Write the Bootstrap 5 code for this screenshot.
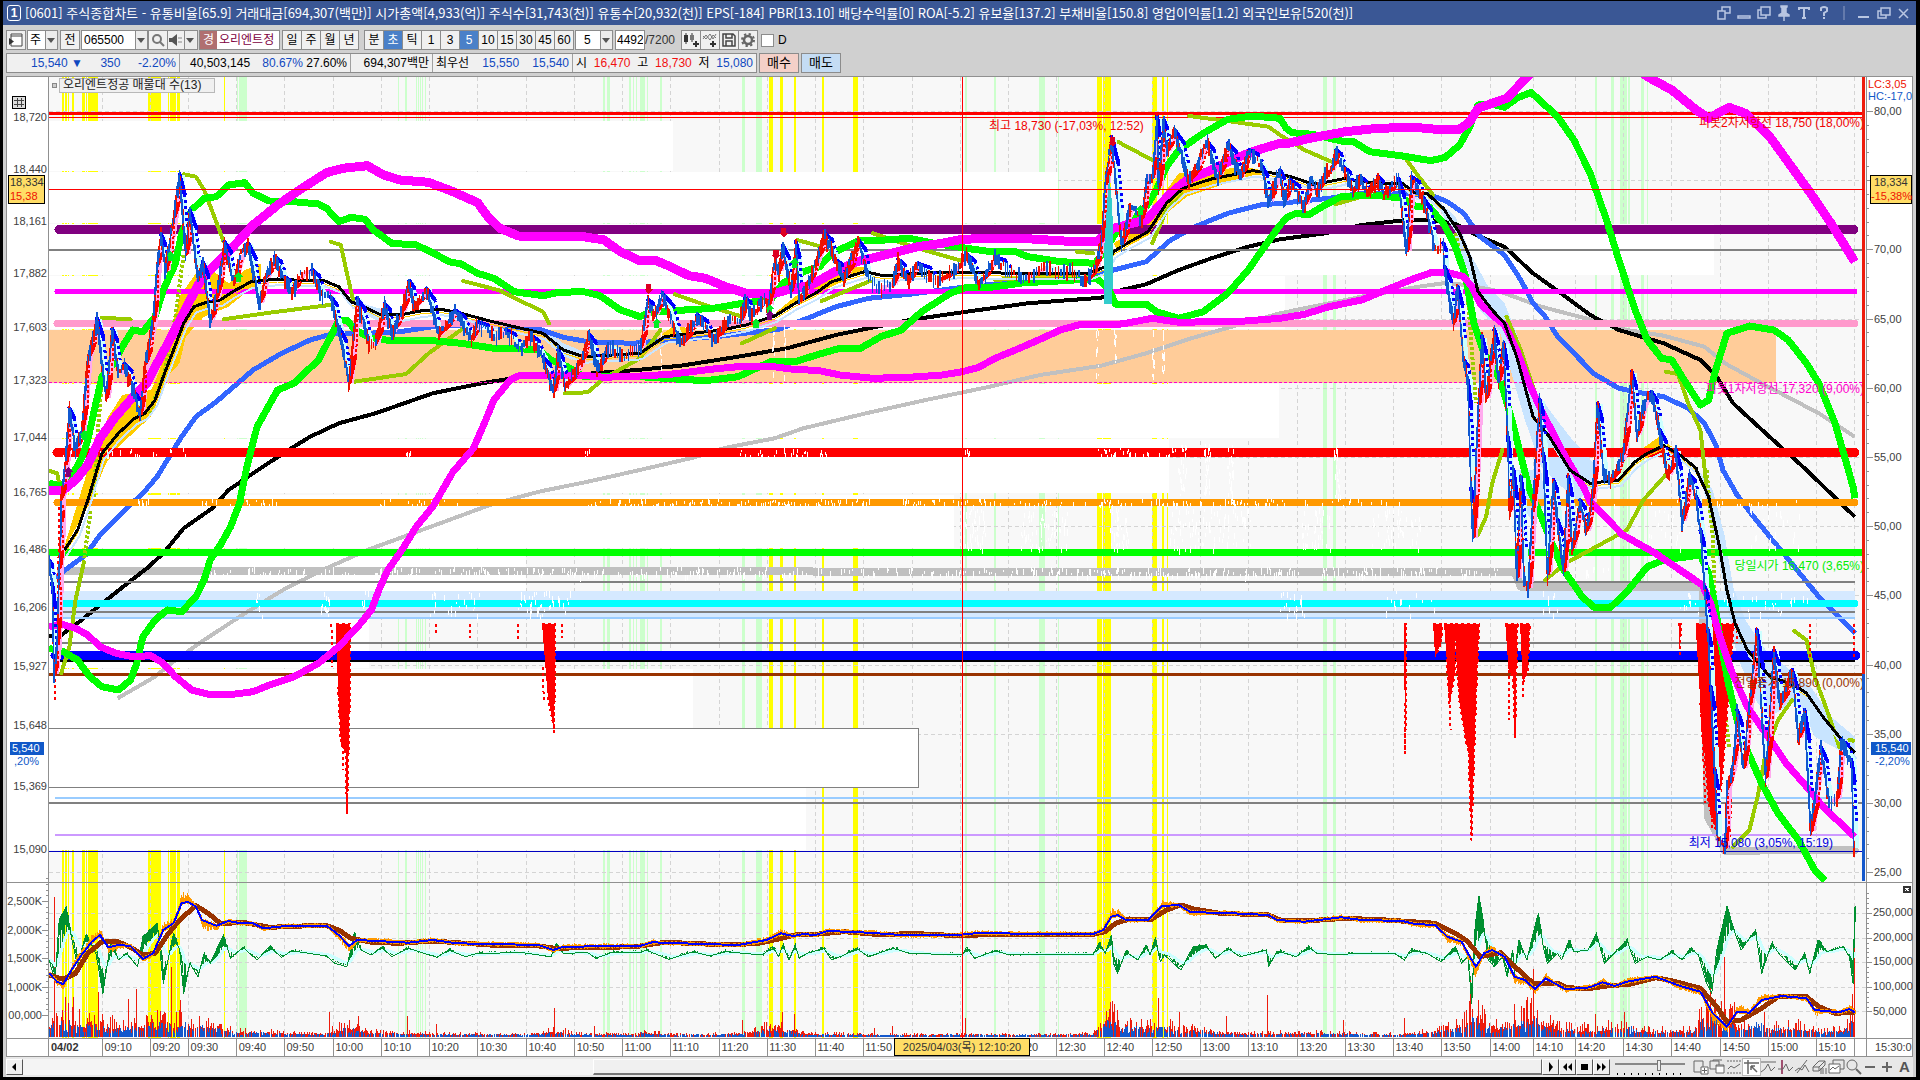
<!DOCTYPE html>
<html lang="ko">
<head>
<meta charset="utf-8">
<meta name="viewport" content="width=device-width, initial-scale=1">
<title>[0601] 주식종합차트</title>
<link href="https://cdn.jsdelivr.net/npm/bootstrap@5.3.0/dist/css/bootstrap.min.css" rel="stylesheet">
<style>
:root{--ui:"Liberation Sans","Noto Sans CJK KR",sans-serif}
body{background:#000;font:12px/16px var(--ui);color:#000;overflow:hidden}
button,input,select{font:12px/16px var(--ui);color:#000}
.win{background:#d0d0d0;margin:1px 4px 3px 3px;height:calc(100vh - 4px)}
.titlebar{background:#3a5795;color:#fff;height:24px;white-space:pre;font:13px/20px "Noto Sans CJK KR",sans-serif}
.tl-num{width:14px;height:16px;border:1px solid #fff;border-radius:3px;font:700 12px/14px var(--ui);text-align:center}
.titlebar svg{width:16px;height:16px;stroke:#b9c6e2;fill:none;stroke-width:1.5}
.tb{height:20px;padding:0 3px;white-space:nowrap}
.tb1{margin-top:5px}.tb2{margin-top:3px;margin-bottom:3px}
.gap-s{margin-left:2px}.gap-m{margin-left:6px}
.tbtn{height:20px;border:1px solid #8c8c8c;background:#f0f0f0;padding:0;text-align:center;width:20px;margin-right:-1px;flex:none;line-height:18px}
.tbtn.on{background:#4a80c8;color:#fff}
.tbtn svg{width:16px;height:16px;display:block;margin:0 auto}
.field{height:20px;border:1px solid #8c8c8c;background:#fff;padding:0 2px;border-radius:0;min-width:0;flex:none;appearance:none;line-height:18px;display:block}
.kind{width:31px}.code{width:67px}.speaker{width:31px}.stock{width:81px;color:#800040;padding:0;overflow:hidden}
.stock b{background:#b07070;color:#fff;width:17px;text-align:center;margin-right:2px;font-weight:400}
.period{width:38px;padding-left:8px}.bars{width:30px;padding:0 1px}.barmax{width:36px;color:#333}
.dbox{width:13px;height:13px;margin:0 4px}
.dbox:checked{background:#4a80c8}
.combo{position:relative;height:20px;flex:none}
.combo::before{content:"";position:absolute;right:1px;top:1px;width:12px;height:18px;background:#ececec;border-left:1px solid #8c8c8c}
.combo::after{content:"";position:absolute;right:3px;top:8px;border:4px solid transparent;border-top:5px solid #555;border-bottom:0}
.quotes{width:751px;height:20px;background:#f0f0f0;border:1px solid #8c8c8c;line-height:18px}
.quotes>div{border-right:1px solid #a0a0a0;padding:0 3px}
.quotes>div:last-child{border:0}
.q1{width:173px}.quotes>.q1{padding-left:24px}.q2{width:171px}.quotes>.q2{padding-left:10px}.q3{width:82px}.q4{width:140px}
.dn{color:#1048c0}.up{color:#f01010}
.obtn{width:40px;height:20px;border:1px solid #8c8c8c;padding:0;margin-left:2px;font-size:13px}
.buy{background:#f4d0c8}.sell{background:#c4dcf4}
.stage{flex:1 1 0;min-height:0;margin:0 3px;background:#fff;border-top:1px solid #909090}
.stage svg{display:block;width:100%;height:100%}
.stage text{font-family:var(--ui);font-size:11px}
.stage text.ko{font-size:12px}
.foot{height:20px;margin:0 3px;background:#e8e8e8;padding-top:2px}
.track{height:16px;background:#f4f4f4}
.thumb{margin-left:37.5%;height:16px;background:#f0f0f0;border:1px solid #fff;border-right-color:#666;border-bottom:2px solid #777;padding:0;display:block;width:62.5%}
.pb{width:17px;height:16px;border:1px solid #fff;border-right:1px solid #555;border-bottom:1px solid #555;background:#f0f0f0;padding:0;flex:none}
.pb svg{display:block;width:15px;height:14px}
.tool{border:0;background:none;padding:0;width:17px;height:16px;flex:none}
.tool.on{background:#fff;outline:1px solid #bbb}
.tool svg{display:block;width:17px;height:16px;fill:none;stroke:#666}
.tool.letter{font:700 15px/16px var(--ui);color:#555}
.zoomer{width:70px;height:16px;margin:0 7px 0 5px;appearance:none;background:linear-gradient(#888,#888) 0 4px/100% 2px no-repeat,repeating-linear-gradient(90deg,#000 0 1px,transparent 1px 7px) 2px 14px/100% 2px no-repeat}
.zoomer::-webkit-slider-thumb{appearance:none;width:4px;height:11px;background:#eee;border:1px solid #777;margin-top:-4px}
</style>
<script src="https://cdn.jsdelivr.net/npm/bootstrap@5.3.0/dist/js/bootstrap.bundle.min.js"></script>
</head>
<body>
<main class="win d-flex flex-column">
<header class="titlebar d-flex align-items-center flex-shrink-0">
 <span class="tl-num ms-1 me-1">1</span>
 <span class="flex-grow-1">[0601] 주식종합차트 - 유통비율[65.9] 거래대금[694,307(백만)] 시가총액[4,933(억)] 주식수[31,743(천)] 유통수[20,932(천)] EPS[-184] PBR[13.10] 배당수익률[0] ROA[-5.2] 유보율[137.2] 부채비율[150.8] 영업이익률[1.2] 외국인보유[520(천)]</span>
 <span class="d-flex gap-1 me-1">
 <svg viewBox="0 0 16 16"><path d="M2 6h7v8H2zM6 6V2h8v6H9"/></svg>
 <svg viewBox="0 0 16 16"><path d="M2 11h12v2H2z"/></svg>
 <svg viewBox="0 0 16 16"><path d="M5 2h9v8H5zM5 5H2v8h8v-3"/></svg>
 <svg viewBox="0 0 16 16"><path d="M5 1h6v1l-1 1v5l3 2v1H3v-1l3-2V3L5 2zM8 11v5" fill="#b9c6e2"/></svg>
 <svg viewBox="0 0 16 16"><path d="M3 5V3h10v2M8 3v10M6 13h4" stroke-width="2"/></svg>
 <svg viewBox="0 0 16 16"><path d="M5 6V3q3-2 6 0v3L8 8v3M8 12v2" stroke-width="2"/></svg>
 <svg viewBox="0 0 16 16"><path d="M8 1v14" stroke="#7386b5"/></svg>
 <svg viewBox="0 0 16 16"><path d="M2 12h11" stroke-width="2"/></svg>
 <svg viewBox="0 0 16 16"><path d="M5 3h9v7H5zM5 6H2v7h8v-3"/></svg>
 <svg viewBox="0 0 16 16"><path d="M3 4l9 9M12 4l-9 9"/></svg>
 </span>
</header>

<div class="tb tb1 d-flex align-items-center flex-shrink-0">
 <button class="tbtn" aria-label="패널"><svg viewBox="0 0 16 16"><path d="M3 2h11v12H3z" fill="#fff" stroke="#444"/><path d="M3 4h11" stroke="#444"/><path d="M1 6v7l5-3.500z" fill="#333"/></svg></button>
 <span class="combo gap-s"><select class="field kind" aria-label="구분"><option>주</option></select></span>
 <button class="tbtn gap-s">전</button>
 <span class="combo gap-s"><input class="field code" value="065500" aria-label="종목코드"></span>
 <button class="tbtn" aria-label="검색"><svg viewBox="0 0 16 16"><circle cx="7" cy="7" r="4" fill="none" stroke="#777" stroke-width="2"/><path d="M10 10l4 4" stroke="#777" stroke-width="2"/></svg></button>
 <span class="combo"><button class="tbtn speaker" aria-label="소리"><svg viewBox="0 0 16 16" class="ms-0"><path d="M1 6h3l5-4v12L4 10H1z" fill="#555"/><path d="M11 5v2M13 5v2M11 9v2M13 9v2" stroke="#888"/></svg></button></span>
 <span class="field stock d-flex gap-s"><b>경</b>오리엔트정</span>
 <span class="d-flex gap-s"><button class="tbtn">일</button><button class="tbtn">주</button><button class="tbtn">월</button><button class="tbtn">년</button></span>
 <span class="d-flex gap-m"><button class="tbtn">분</button><button class="tbtn on">초</button><button class="tbtn">틱</button></span>
 <span class="d-flex"><button class="tbtn">1</button><button class="tbtn">3</button><button class="tbtn on">5</button><button class="tbtn">10</button><button class="tbtn">15</button><button class="tbtn">30</button><button class="tbtn">45</button><button class="tbtn">60</button></span>
 <span class="combo gap-s"><select class="field period" aria-label="주기"><option>5</option></select></span>
 <input class="field bars gap-s" value="4492" aria-label="봉수"><span class="barmax">/7200</span>
 <button class="tbtn" aria-label="봉 추가"><svg viewBox="0 0 16 16"><path d="M3 1v11M9 1v9" stroke="#333"/><path d="M1 3h4v7H1z" fill="#333"/><path d="M7 3h4v5H7z" fill="#777"/><path d="M13 9v6M10 12h6" stroke="#333" stroke-width="2"/></svg></button>
 <button class="tbtn" aria-label="지표 추가"><svg viewBox="0 0 16 16"><path d="M1 7l3-4 4 5 3-5 3 3M1 4l3 3 4-5 3 5 3-5" fill="none" stroke="#777"/><path d="M11 9v6M8 12h6" stroke="#333" stroke-width="2"/></svg></button>
 <button class="tbtn" aria-label="저장"><svg viewBox="0 0 16 16"><path d="M2 2h10l2 2v10H2zM5 2v4h6V2M5 14V9h6v5" fill="none" stroke="#444" stroke-width="1.500"/></svg></button>
 <button class="tbtn" aria-label="설정"><svg viewBox="0 0 16 16"><circle cx="8" cy="8" r="4" fill="none" stroke="#666" stroke-width="2.500"/><circle cx="8" cy="8" r="6" fill="none" stroke="#666" stroke-width="2" stroke-dasharray="2.300 2.400"/></svg></button>
 <input type="checkbox" id="dchk" class="field dbox"><label for="dchk">D</label>
</div>

<div class="tb tb2 d-flex flex-shrink-0">
 <div class="quotes d-flex flex-shrink-0">
  <div class="q1 dn d-flex justify-content-between"><span>15,540 ▼</span><span>350</span><span>-2.20%</span></div>
  <div class="q2 d-flex justify-content-between"><span>40,503,145</span><span><span class="dn">80.67%</span> 27.60%</span></div>
  <div class="q3 text-end">694,307백만</div>
  <div class="q4 d-flex justify-content-between"><span>최우선</span><span class="dn">15,550</span><span class="dn">15,540</span></div>
  <div class="d-flex justify-content-between flex-grow-1"><span>시</span><span class="up">16,470</span><span>고</span><span class="up">18,730</span><span>저</span><span class="dn">15,080</span></div>
 </div>
 <button class="obtn buy">매수</button><button class="obtn sell">매도</button>
</div>

<section class="stage" id="stage"></section>

<footer class="foot d-flex flex-shrink-0">
 <button class="pb" aria-label="왼쪽"><svg viewBox="0 0 15 14"><path d="M9 3v8L5 7z"/></svg></button>
 <div class="track flex-grow-1"><button class="thumb" aria-label="스크롤"></button></div>
 <button class="pb" aria-label="재생"><svg viewBox="0 0 15 14"><path d="M6 2v10l4-5z"/></svg></button>
 <button class="pb" aria-label="뒤로"><svg viewBox="0 0 15 14"><path d="M7 3v8L3 7zM12 3v8L8 7z"/></svg></button>
 <button class="pb" aria-label="정지"><svg viewBox="0 0 15 14"><path d="M4 4h7v6H4z"/></svg></button>
 <button class="pb" aria-label="앞으로"><svg viewBox="0 0 15 14"><path d="M3 3v8l4-4zM8 3v8l4-4z"/></svg></button>
 <input type="range" class="zoomer" aria-label="배율" value="64">
 <button class="tool" aria-label="창 추가"><svg viewBox="0 0 17 16"><path d="M2 2h9v11H2z"/><path d="M9 8h7v7H9zM12.500 9v5M10 11.500h5" fill="#fff"/></svg></button>
 <button class="tool" aria-label="창 복사"><svg viewBox="0 0 17 16"><path d="M1 2h9v8H1zM4 2V1h9"/><path d="M7 6h8v8H7zM7 7h8" fill="#fff"/></svg></button>
 <button class="tool" aria-label="영역"><svg viewBox="0 0 17 16"><path d="M1 2h14M1 14h14" stroke-dasharray="2 1"/><path d="M2 10l3-3 3 2 6-4"/></svg></button>
 <button class="tool on" aria-label="십자선"><svg viewBox="0 0 17 16"><path d="M1 4h15M5 1v14M8 7l6 6M8 7v4M8 7h4" stroke-width="1.500"/></svg></button>
 <button class="tool" aria-label="수평선"><svg viewBox="0 0 17 16"><path d="M1 3h15M1 13l4-3 3-5 3 7 4-4"/></svg></button>
 <button class="tool" aria-label="수직선"><svg viewBox="0 0 17 16"><path d="M5 1v14" stroke="#a05070" stroke-width="2"/><path d="M1 10h5l3-5 3 7 4-4"/></svg></button>
 <button class="tool" aria-label="추세선"><svg viewBox="0 0 17 16"><path d="M3 14L13 1M1 12l4-3 3 2 3-5 4 7"/></svg></button>
 <button class="tool" aria-label="모두 지우기"><svg viewBox="0 0 17 16"><path d="M2 8l6-6h6l-6 6v4H2zM2 8h6M14 2v4l-6 6M10 15V9M12 15V9M15 15V9"/></svg></button>
 <button class="tool" aria-label="이미지"><svg viewBox="0 0 17 16"><path d="M5 1h11v9H5z"/><path d="M1 5h11v9H1zM2 11l3-3 2 2 4-3" fill="#fff"/></svg></button>
 <button class="tool" aria-label="돋보기"><svg viewBox="0 0 17 16"><circle cx="7" cy="6" r="5"/><path d="M11 10l5 5" stroke-width="2"/></svg></button>
 <button class="tool" aria-label="축소"><svg viewBox="0 0 17 16"><path d="M3 8h10" stroke-width="2"/></svg></button>
 <button class="tool" aria-label="확대"><svg viewBox="0 0 17 16"><path d="M3 8h10M8 3v10" stroke-width="2"/></svg></button>
 <button class="tool letter">A</button>
</footer>
</main>

<script>
/* Chart data. Traces are stored per tile: origin (x,y) and points at 2.45 x 3 units per pixel. */
const TILES={a:[0,130],b:[640,100],c:[1280,70],d:[1280,470],e:[0,500],p:[0,860],q:[640,860],r:[1280,860]};
function trace(s){
  const out=[];let o=[0,0];
  s.trim().split(/\s+/).forEach(t=>{
    if(TILES[t]){o=TILES[t];return}
    const [x,y]=t.split(',').map(Number);out.push([o[0]+x/2.45,o[1]+y/3]);
  });
  return out;
}
const upperBand=trace(`a 120,1080 155,1080 185,1050 215,1005 245,925 280,865 330,795 360,760 385,700 420,620 455,535 490,455 530,400 575,345 620,285 680,225 740,175 800,128 840,115 900,107 940,135 980,150 1050,157 1110,185 1170,218 1195,260 1225,295 1270,318 1330,320 1420,318 1480,330 1520,365 1568,392 b 20,480 40,482 75,500 120,527 160,535 210,560 260,580 320,583 360,570 420,555 470,520 530,485 600,465 680,440 740,430 790,418 860,415 960,417 1050,424 1120,424 1160,385 1200,372 1240,360 1270,320 1300,280 1340,240 1400,210 1450,180 1500,155 1568,130 c 20,220 80,203 160,185 240,175 330,172 400,180 440,178 465,155 485,115 520,100 555,85 575,60 605,20 700,-80 800,-80 900,20 960,60 1020,120 1050,145 1100,112 1140,130 1200,200 1250,285 1300,370 1350,460 1408,575`);
const lowerBand=trace(`e 120,380 150,372 185,385 215,405 245,440 285,460 325,470 370,467 400,490 430,530 470,570 510,583 570,583 620,575 660,555 720,530 780,490 830,440 880,375 910,330 930,265 950,210 985,150 1020,80 a 1060,1130 1110,1025 1160,955 1190,870 1210,810 1250,750 1275,735 1340,735 1420,735 1480,742 1568,738 b 20,827 80,822 180,807 250,799 320,799 370,807 440,812 490,825 570,835 660,832 740,825 790,815 830,802 870,775 920,750 980,718 1030,690 1080,673 1160,675 1190,670 1255,655 1320,667 1400,665 1460,665 1568,655 c 20,741 60,733 120,710 200,690 270,655 330,625 370,608 410,607 450,620 470,650 490,700 520,735 550,765 580,840 610,940 640,1020 690,1140 745,1255 d 760,95 840,195 920,250 980,300 1035,345 1055,400 1075,490 1105,600 1145,710 1190,790 1240,880 1290,950 1330,1010 1408,1100`);
const greenUp=trace(`a 120,1060 150,1068 175,1040 200,985 215,930 235,820 250,740 280,700 300,650 325,600 350,605 380,560 400,480 430,400 445,310 470,240 500,205 530,200 560,165 600,158 620,190 660,213 720,215 780,222 800,235 830,275 860,262 895,268 915,300 960,340 1020,345 1060,368 1100,395 1130,402 1170,430 1210,445 1260,485 1330,497 1370,487 1430,485 1470,497 1520,540 1568,560 b 20,638 80,632 180,625 260,608 320,600 350,550 400,515 440,500 470,460 540,420 600,420 660,415 720,430 790,443 860,455 920,455 950,470 1030,485 1115,490 1140,450 1170,390 1200,370 1240,320 1265,270 1290,200 1320,150 1380,100 1440,58 1500,48 1568,55 c 15,175 30,188 80,193 150,213 180,215 220,245 300,258 370,272 405,262 440,225 465,170 485,105 520,103 550,112 580,85 615,67 640,95 680,140 720,210 760,310 800,450 830,570 870,720 900,810 935,865 960,870 990,930 1030,1005 1050,990 1065,910 1095,790 1150,768 1210,780 1245,810 1290,880 1320,940 1360,1060 1405,1255 d 1408,85`);
const greenLow=trace(`e 120,445 155,455 190,480 220,530 250,560 290,570 320,540 335,490 350,410 380,360 410,330 445,335 480,290 500,240 515,180 540,135 565,80 590,0 a 590,1100 605,1010 630,890 680,780 720,760 780,690 810,620 830,570 850,570 870,600 910,625 960,632 1060,632 1130,640 1210,655 1260,655 1320,660 1350,690 1390,710 1430,740 1500,740 1568,740 b 60,835 160,842 240,830 320,785 380,785 440,762 490,745 540,745 590,710 640,690 690,635 760,580 800,562 860,562 940,548 1040,542 1120,535 1150,570 1165,612 1240,612 1265,635 1320,655 1380,635 1440,580 1490,510 1530,440 1568,375 c 20,440 40,430 70,435 110,405 150,380 230,375 300,385 330,408 365,410 400,460 430,530 455,620 475,760 500,850 540,930 570,1060 610,1255 d 640,140 690,290 740,380 770,412 810,412 850,365 900,290 940,270 1030,255 1050,310 1065,400 1080,520 1100,650 1130,800 1180,940 1220,1030 1270,1110 1310,1200 1335,1232`);
const blueMA=trace(`e 135,235 170,200 210,165 245,105 a 310,1135 350,1090 385,1040 420,970 445,920 480,860 530,815 620,720 690,670 760,630 820,610 900,610 980,605 1060,590 1130,585 1200,588 1320,597 1380,622 1440,635 1550,640 b 200,708 340,688 420,650 480,620 560,595 660,583 790,562 900,548 1020,530 1110,525 1160,510 1240,485 1300,420 1360,380 1440,340 1520,315 c 0,400 120,385 200,370 300,370 370,375 410,395 450,430 490,500 550,555 590,630 620,700 650,740 680,800 720,850 770,912 830,955 890,970 940,980 1000,1015 1040,1060 1070,1130 d 1085,0 1120,75 1160,140 1240,260 1320,380 1410,490`);
const longMA=trace(`e 120,408 150,405 200,360 240,320 300,262 360,205 400,160 450,85 a 520,1135 560,1080 620,1030 700,965 760,920 830,880 920,850 1060,790 1180,760 1280,740 1400,735 1560,720 b 100,797 240,770 360,745 480,705 560,685 660,660 800,635 950,610 1130,593 1180,570 1240,553 1320,510 1400,475 1490,440 c 0,508 110,490 200,465 310,450 370,450 430,462 490,500 550,530 620,610 700,680 760,735 830,780 940,820 1030,870 1070,920 1110,1000 1190,1090 d 1290,0 1408,140`);
const shortMA=trace(`e 158,150 190,90 a 215,1110 230,1050 250,970 290,910 330,865 355,850 380,810 400,740 425,660 450,580 475,530 510,515 540,510 570,485 615,455 680,447 720,450 790,450 830,470 860,515 900,535 930,553 980,555 1030,543 1080,538 1130,550 1200,573 1260,590 1330,610 1380,660 1430,680 1500,675 1568,670 b 60,710 130,700 200,690 260,675 330,648 380,610 430,580 470,545 550,515 600,528 660,520 800,517 920,520 1100,520 1140,500 1160,455 1200,425 1245,395 1290,310 1330,265 1400,237 1450,225 1500,212 1568,222 c 40,325 80,343 120,335 160,325 200,335 260,340 300,340 330,368 360,370 400,415 440,490 465,560 485,665 520,720 550,760 580,860 600,950 620,1040 660,1100 710,1200 760,1240 830,1230 870,1175 900,1150 940,1127 980,1155 1020,1195 d 1020,0 1050,80 1075,220 1095,360 1115,460 1145,540 1200,620 1260,645 1290,670 1330,740 1370,800 1408,848`);
const greyMA=trace(`e 288,595 380,530 430,480 500,420 600,340 700,265 790,210 900,150 1000,105 1100,60 a 1200,1125 1320,1085 1440,1055 1560,1022 b 130,1073 210,1043 330,1015 400,985 560,938 700,900 850,862 980,825 1130,797 1240,760 1350,715 1450,680 1568,640 c 200,680 340,650 400,640 460,645 540,665 640,710 780,755 850,780 940,797 1040,830 1090,880 1180,940 1320,1030 1408,1100`);
const gold=[`a 160,1240 200,1080 230,960 265,860 300,795 370,780 385,740 410,650 440,500 480,430 520,420 560,460 600,420 640,400 640,460 600,490 560,530 500,560 455,620 440,700 410,740 390,800 370,860 330,905 290,950 260,1000 215,1130 160,1250`,`b 330,640 380,590 440,540 500,500 560,500 520,530 470,560 400,605`,`b 1160,430 1240,370 1290,270 1320,220 1380,215 1480,200 1540,215 1470,235 1400,265 1340,290 1280,350 1240,410 1170,450`,`b 50,705 80,680 140,685 120,700`,`c 870,1150 930,1100 960,1130 900,1165`].map(trace);
const sky=[`c 380,385 430,440 470,560 510,650 550,700 580,790 620,950 660,1020 710,1100 780,1195 d 770,50 730,90 690,50 c 640,1190 600,1050 560,880 540,790 490,720 460,600 420,490`,`d 1025,0 1060,60 1090,200 1110,350 1140,450 1190,540 1250,600 1300,650 1350,740 1408,800 1408,860 1370,840 1310,800 1270,690 1200,740 1170,700 1120,560 1080,300 1050,120`,`a 860,505 900,525 960,545 930,575 880,545`,`a 1330,590 1380,640 1430,665 1400,690 1350,650`,`d 560,0 640,0 650,100 620,160 590,100`].map(trace);
const olive=[`a 120,1022 140,1030 145,1060`,`a 250,563 320,568`,`a 450,133 480,140 500,180 525,260 548,335`,`a 548,568 650,550 820,523`,`a 810,335 835,345 850,430 865,510`,`a 868,755 995,732 1050,670 1135,595`,`a 1135,453 1220,480 1330,545 1345,580`,`a 1383,790 1440,787 1480,745 1568,685`,`b 0,775 50,690`,`b 85,583 160,615 250,650`,`b 250,730 330,685`,`b 385,420 450,442`,`b 445,603 570,540`,`b 570,400 680,445 790,483`,`b 870,540 1060,523 1110,527`,`b 1070,455 1110,460`,`b 1170,125 1255,180`,`b 1255,430 1290,330 1330,270`,`b 1345,48 1420,60 1540,80 1568,105`,`c 0,195 60,240 135,280`,`c 135,403 200,380`,`c 310,270 340,320 375,375`,`c 555,740 590,840 625,970`,`d 485,195 505,140 520,40 c 545,1140`,`c 945,905 975,912 1000,1000 1030,1080 1045,1250`,`d 650,330 700,280 850,180 890,90 945,15`,`d 1110,1130 1150,1080 1170,980 1190,850 1220,750 1255,690`,`d 1260,483 1290,510 1310,620 1340,720 1370,830`,`d 1395,810 1405,812`,`e 150,520 170,440 185,300 205,190`].map(trace);
const oliveDots=[`a 230,1100 240,900 250,750 260,700`,`a 365,850 400,740 430,560 450,370`,`e 205,190 222,30`,`c 430,490 460,680 480,1000`,`d 1045,0 1060,200 1065,380 1080,620 1100,830`].map(trace);
const price=trace(`e 120,180 128,250 132,520 140,430 145,200 150,60 a 150,1100 160,1000 170,835 185,950 200,900 215,680 238,565 260,800 275,597 290,730 305,700 330,790 343,850 355,700 375,570 385,400 395,315 405,420 425,260 440,133 455,370 465,240 485,440 497,395 515,565 530,500 550,335 572,455 590,370 608,340 635,515 650,440 673,380 695,440 715,480 740,425 765,420 790,490 810,500 830,590 855,755 875,505 905,640 920,635 942,520 960,600 985,540 1003,453 1015,525 1045,475 1075,610 1115,540 1155,625 1170,575 1210,615 1240,600 1275,650 1300,615 1330,680 1357,780 1367,660 1385,765 1420,700 1443,612 1465,710 1490,645 1530,675 1560,640 b 0,740 20,600 35,640 55,580 100,730 140,645 180,715 215,655 245,660 257,595 275,640 305,590 315,610 330,480 340,510 350,437 370,570 382,425 390,600 410,550 435,470 453,400 480,480 500,530 535,420 560,530 585,560 620,550 632,478 655,540 680,490 730,540 780,495 800,462 830,545 870,470 910,515 940,530 990,500 1060,510 1090,540 1115,500 1130,420 1140,250 1155,110 1180,430 1200,315 1230,350 1243,220 1255,230 1267,50 1270,260 1283,60 1290,150 1310,90 1345,240 1390,125 1415,230 1440,130 1470,225 1492,150 1525,200 1540,300 1560,230 c 0,300 10,390 25,330 60,400 75,325 90,360 110,305 125,295 137,240 155,290 180,360 195,320 215,365 240,320 255,370 290,325 310,540 322,320 350,380 380,530 400,520 403,590 425,755 435,650 450,870 460,930 468,1255 d 472,200 c 486,1000 495,800 505,980 515,880 525,780 535,930 548,820 558,1100 d 562,120 572,0 580,320 590,20 598,330 608,350 618,120 c 636,990 645,1150 d 655,310 670,30 680,150 694,300 706,20 715,230 735,90 750,180 765,80 c 778,1000 792,1200 810,1230 840,1150 862,905 875,1090 890,1000 910,965 930,1080 950,1210 970,1140 d 985,150 1003,15 1020,80 1030,180 1040,350 1048,480 1055,650 1065,900 1072,1100 1090,1130 1095,950 1110,880 1120,720 1135,890 1150,700 1168,480 1190,920 1210,540 1225,700 1255,600 1270,800 1285,720 1300,1080 1325,830 1345,990 1365,980 1375,810 1400,870 1406,1130`);
const spikesDown=[`e 822,372 858,372 857,600 853,800 850,940 847,760 835,730 828,560`,`e 1328,372 1360,372 1358,690 1342,590`,`d 402,462 428,462 430,600 424,640 415,700 408,560`,`d 428,462 488,462 480,700 469,1110 462,850 440,700 432,560`,`d 552,462 582,462 579,620 576,800 571,620 560,600`,`d 588,462 612,462 607,600 595,640`,`d 1018,462 1112,462 1100,650 1085,900 1070,1090 1050,1000 1030,700`,`d 303,462 310,462 307,850`,`d 375,462 398,462 395,520 380,560`,`d 976,462 982,462 980,560`].map(trace);
const spikeDots=[`e 812,372 814,500`,`e 1330,500 1332,600`,`e 1069,372 1069,400`,`e 1151,372 1151,415`,`e 1270,372 1270,420`,`e 1376,372 1376,415`,`e 1357,600 1357,700`,`e 134,520 134,600`,`e 840,700 840,810`,`e 145,20 140,480`,`e 851,860 851,948`,`d 307,700 307,858`,`d 412,560 418,780`,`d 560,600 560,750`,`d 575,650 576,810`,`d 595,600 595,690`,`d 450,650 455,830`,`d 1030,650 1042,1000`,`d 1045,850 1060,1080`,`d 1105,950 1103,1100`,`d 1119,462 1119,520`,`d 1298,462 1298,570`,`d 1405,462 1405,560`].map(trace);
const brown=trace(`p 120,345 155,358 185,340 215,280 250,245 285,243 320,262 350,285 380,280 410,225 440,180 480,137 510,160 540,190 600,188 660,202 740,198 800,197 830,210 860,235 910,247 980,250 1060,243 1120,248 1200,255 1320,258 1360,265 1430,263 1560,260 q 0,258 60,247 220,255 290,250 340,237 380,225 440,222 500,215 600,225 660,220 780,227 900,222 1110,223 1140,215 1165,190 1200,177 1250,180 1290,150 1325,135 1360,148 1420,160 1540,165 r 0,180 60,183 160,175 260,180 380,190 430,220 460,245 490,290 540,278 580,325 620,370 680,370 700,382 750,387 800,378 860,372 920,353 960,362 1030,385 1070,440 1095,485 1130,480 1180,445 1220,410 1290,410 1320,440 1360,460 1408,457`);
const navy=trace(`p 120,340 140,365 155,373 175,330 200,285 225,245 245,225 265,262 290,255 320,258 350,297 375,280 400,210 425,190 445,130 460,125 480,140 495,180 530,197 560,183 590,190 620,190 645,205 700,198 800,197 830,225 855,258 875,240 1000,248 1060,240 1120,250 1320,255 1355,270 1380,260 1568,258 q 30,247 100,250 240,255 310,240 345,220 375,228 400,222 430,225 460,213 560,218 640,225 780,225 820,220 1110,222 1135,210 1155,170 1170,165 1190,180 1245,180 1280,138 1320,135 1350,157 1420,158 1540,165 1560,180 r 60,185 150,172 200,180 300,183 330,192 380,195 410,230 445,245 465,290 480,320 500,280 520,270 550,290 575,350 600,360 625,388 650,355 700,388 760,382 790,367 820,378 850,365 920,350 980,378 1030,395 1060,460 1095,500 1120,455 1150,458 1180,420 1230,408 1290,415 1310,450 1370,457 1395,447 1408,457`);
const osc=trace(`p 120,300 135,360 145,180 162,140 175,230 190,320 210,225 235,280 252,400 272,240 290,300 310,280 337,320 350,230 385,190 400,370 425,220 440,270 450,400 465,310 485,350 500,280 515,310 547,225 565,295 595,262 630,300 660,260 690,292 715,272 800,288 820,310 850,320 868,220 885,270 910,285 935,262 960,290 1000,265 1070,292 1100,270 1140,290 1170,280 1280,278 1350,290 1363,250 1380,280 1440,278 1460,295 1500,277 1568,278 q 15,270 70,298 130,275 170,288 210,275 300,285 325,260 340,290 350,255 365,300 380,255 390,295 410,280 450,265 470,300 500,285 530,265 560,290 620,265 660,280 790,285 800,262 820,295 870,272 900,283 1110,283 1125,250 1140,280 1155,225 1160,310 1170,340 1190,275 1220,300 1240,255 1250,285 1262,235 1275,305 1285,285 1325,330 1355,260 1385,255 1410,295 1440,265 1470,290 1535,270 1540,320 1560,275 r 0,275 40,290 70,260 90,280 150,285 180,280 280,280 305,300 320,270 360,280 395,305 430,260 445,310 460,290 470,430 478,200 487,110 495,160 510,300 525,320 545,290 557,350 570,270 575,340 585,240 605,300 620,220 633,160 645,260 655,310 680,280 690,300 708,240 720,275 755,270 775,220 795,310 850,240 870,310 900,290 930,300 960,275 985,300 1005,265 1025,285 1045,370 1058,400 1070,270 1080,220 1095,140 1112,210 1130,270 1165,210 1180,340 1205,250 1225,285 1262,330 1285,280 1298,340 1318,240 1340,275 1380,260 1395,290 1404,370 1408,140`);
/* volume: y holds the bar height */
function heights(s){return trace(s).map(([x,y])=>[x,y-860])}
const volBase=heights(`p 120,55 160,85 180,75 200,60 240,65 280,45 340,45 380,65 410,60 450,65 500,50 540,40 580,18 640,18 700,12 800,10 830,40 860,40 900,18 1000,14 1100,9 1320,9 1360,28 1400,12 1560,7 q 0,20 60,9 240,9 310,35 350,35 400,12 600,7 1110,9 1150,90 1180,50 1250,45 1290,45 1340,28 1380,32 1420,14 1560,12 r 0,16 300,9 380,24 440,50 470,95 500,70 540,45 580,70 620,95 660,50 700,36 770,30 850,55 880,24 1010,24 1040,95 1090,85 1140,45 1170,70 1210,36 1260,46 1290,36 1320,24 1380,24 1400,70 1410,70`);
const volSpikes=heights(`p 133,420 160,120 180,120 241,135 315,115 334,143 420,210 442,110 807,74 879,62 998,62 1069,38 1358,86 1456,32 q 250,50 350,76 378,70 575,26 618,32 797,58 1152,105 1201,58 1270,118 1322,74 1437,62 1538,125 r 155,50 306,56 467,170 495,95 574,100 607,120 620,205 774,68 844,76 1054,180 1088,240 1113,105 1402,130 1408,300`);
const bands={'#ffff00':{p:'152-157 160-163 166-169 176-180 201-208 211-213 216-240 363-394 412-414 416-432 434-441 549-551',q:'316-326 342-350 377-382 446-451 522-534 1119-1132 1134-1154 1254-1267 1279-1284 1291-1294'},
'#ccffcc':{p:'580-582 585-605 974-978 992-997 1018-1020 1023-1027 1029-1031 1034-1036 1040-1044 1477-1482 1487-1494 1540-1546 1551-1554 1558-1561',q:'0-12 16-18 49-55 250-257 284-300 797-801 867-872 978-992 1023-1027',r:'105-115 130-137 771-777 811-818 833-850 853-857 884-891 899-902'}};
const ticks=[['p',[251,369,462,580,697,817,935,1052,1170,1290,1408,1525]],['q',[74,195,312,430,547,667,785,903,1020,1138,1256,1373,1491]],['r',[43,160,278,395,516,621,724,841,959,1079,1197,1314,1408]]].flatMap(([t,l])=>l.map(v=>TILES[t][0]+v/2.45));
const times=['09:10','09:20','09:30','09:40','09:50','10:00','10:10','10:20','10:30','10:40','10:50','11:00','11:10','11:20','11:30','11:40','11:50','','','12:20','12:30','12:40','12:50','13:00','13:10','13:20','13:30','13:40','13:50','14:00','14:10','14:20','14:30','14:40','14:50','15:00','15:10'];

const stage=document.getElementById('stage');
function draw(){
  const w=stage.clientWidth,h=stage.clientHeight,kx=w/1907,ky=h/980;
  const X=v=>Math.round((v-6)*kx*10)/10,Y=v=>Math.round((v-77)*ky*10)/10;
  let seed=7;const rnd=()=>(seed=(seed*16807)%2147483647)/2147483647;
  let o='';
  const rect=(x,y,x2,y2,f,s)=>{o+=`<rect x="${X(x)}" y="${Y(y)}" width="${Math.max(1,X(x2)-X(x)).toFixed(1)}" height="${Math.max(1,Y(y2)-Y(y)).toFixed(1)}" fill="${f}"${s?` stroke="${s}"`:''}/>`};
  const line=(x,y,x2,y2,c,sw,extra='')=>{o+=`<path d="M${X(x)} ${Y(y)}L${X(x2)} ${Y(y2)}" stroke="${c}" stroke-width="${sw}" ${extra}/>`};
  const pts=(a,dx=0,dy=0)=>a.map(p=>X(p[0]+dx)+','+Y(p[1]+dy)).join(' ');
  const poly=(a,c,sw,extra='',dx=0,dy=0)=>{o+=`<polyline points="${pts(a,dx,dy)}" fill="none" stroke="${c}" stroke-width="${sw}" stroke-linejoin="round" ${extra}/>`};
  const area=(a,c)=>{o+=`<polygon points="${pts(a)}" fill="${c}"/>`};
  const text=(x,y,s,c,anchor='start',extra='')=>{o+=`<text x="${X(x)}" y="${Y(y)+4}" fill="${c}" text-anchor="${anchor}" ${extra}>${s}</text>`};
  const round='stroke-linecap="round"',ko='class="ko"',L=49,R=1864;
  const lerp=(a,x)=>{for(let i=1;i<a.length;i++)if(x<=a[i][0]){const p=a[i-1],q=a[i],d=q[0]-p[0]||1;return p[1]+(q[1]-p[1])*Math.max(0,(x-p[0])/d)}return a[a.length-1][1]};

  rect(L,76,1866,1038,'#f8f8f8');
  for(const c in bands)for(const t in bands[c])bands[c][t].split(' ').forEach(b=>{const [m,n]=b.split('-');rect(TILES[t][0]+m/2.45,76,TILES[t][0]+n/2.45,1038,c)});
  ticks.forEach(x=>line(x,77,x,1038,'#d4d4d4',1,'stroke-dasharray="4 3"'));
  for(let i=0;i<12;i++)line(L,111.5+i*69.2,R,111.5+i*69.2,'#d4d4d4',1,'stroke-dasharray="4 3"');
  [913.5,938.5,962.5,987.5,1011.5].forEach(y=>line(L,y,1866,y,'#d4d4d4',1,'stroke-dasharray="4 3"'));
  /* volume-by-price blocks */
  [[121,171,673],[172,223,1058],[224,275,1714],[276,329,1285],[384,438,1279],[439,493,1169],[495,548,954],[549,603,526],[604,668,369],[669,728,693],[728,787,918],[788,850,806]].forEach(r=>rect(L,r[0],r[2],r[1],'#fff'));
  rect(L,330,1776,383,'#ffcc99');
  line(L,728.5,919,728.5,'#808080',1);line(L,787.5,919,787.5,'#808080',1);line(918.5,728,918.5,788,'#808080',1);
  rect(55,591,1855,617,'#d5e9ff');
  sky.forEach(a=>area(a,'#c8e4ff'));
  gold.forEach(a=>area(a,'#ffcc00'));
  /* reference levels */
  poly(trace('e 150,214 d 575,305 590,350 1035,350 1048,1040 1075,1100 1090,1142 1408,1140'),'#c0c0c0',8,round);
  poly(greyMA,'#c0c0c0',4);
  poly(longMA,'#000',4);
  poly(blueMA,'#3366ff',5);
  line(59,229.5,1854,229.5,'#800080',9,round);
  line(L,250,R,250,'#808080',2);
  line(57,291.5,1855,291.5,'#ff00ff',5,round);
  line(57,323.5,1855,323.5,'#ff99cc',7,round);
  line(L,382.5,R,382.5,'#ff00cc',1,'stroke-dasharray="3 2"');
  line(57,452.5,1855,452.5,'#ff0000',9,round);
  line(57,502.5,1855,502.5,'#ff9900',7,round);
  line(L,552.5,R,552.5,'#00ff00',7);
  line(57,603.5,1855,603.5,'#00ffff',7,round);
  [582,612,643].forEach(y=>line(55,y,1855,y,'#808080',2));
  line(55,618,1855,618,'#99ccff',2);
  line(55,655.5,1856,655.5,'#0000ff',9,round);
  line(55,661,1855,661,'#000',2);
  line(L,674.5,R,674.5,'#993300',3);
  line(55,798,1855,798,'#99ccff',2);
  line(L,803,R,803,'#808080',2);
  line(55,835,1855,835,'#cc99ff',2);
  line(L,851.5,R,851.5,'#0000c0',1);
  line(L,113.5,R,113.5,'#ff0000',3);line(L,117.5,R,117.5,'#ff0000',1);
  /* specks that break the level lines */
  const specks=(y,hh,len,list)=>list.forEach(([a,b,n])=>{for(let i=0;i<n;i++){const x=a+rnd()*(b-a),t=y-hh+rnd()*hh*2;rect(x,t,x+1,t+2+rnd()*len,'#fff')}});
  specks(452,4,4,[[63,195,22],[404,410,4],[585,590,4],[740,830,30],[965,970,4],[1095,1175,30],[1333,1338,4]]);
  specks(502,3,4,[[130,150,10],[195,280,22],[380,460,16],[585,870,110],[900,1290,120],[1290,1410,14],[1600,1800,16]]);
  specks(571,4,5,[[205,420,60],[435,600,70],[600,1500,300],[1545,1700,14]]);
  specks(603,12,5,[[255,262,6],[320,330,14],[360,372,14],[430,480,24],[515,570,44],[1280,1305,20],[1385,1435,14],[1540,1560,10],[1680,1810,40]]);
  specks(470,26,5,[[1178,1186,24],[1204,1210,30],[1227,1233,30],[1334,1340,20]]);
  specks(528,20,5,[[960,985,50],[1020,1070,70],[1110,1130,40],[1170,1250,90],[1300,1330,40],[1370,1420,50],[1640,1680,20],[1750,1800,24]]);
  specks(350,26,5,[[772,774,10],[783,785,10],[1096,1098,12],[1114,1116,12],[1152,1154,12],[1162,1164,12],[660,662,8]]);
  oliveDots.forEach(a=>poly(a,'#99cc00',4,'stroke-dasharray="3 2"'));
  olive.forEach(a=>poly(a,'#99cc00',4,round));
  spikesDown.forEach(a=>area(a,'#ff0000'));
  spikesDown.forEach(a=>poly(a,'#ff0000',2,'stroke-dasharray="3 3"'));
  spikeDots.forEach(a=>poly(a,'#ff0000',2,'stroke-dasharray="3 3"'));
  poly(greenLow,'#00ff00',7);poly(greenUp,'#00ff00',7);
  poly(shortMA,'#ffcc00',1,'',0,3);
  poly(shortMA,'#c8e4ff',2,'',2,6);
  /* price: soft shade, trailing-stop dots, then the bars */
  for(let i=1;i<price.length;i++){const a=price[i-1],b=price[i];poly([a,b],b[1]<a[1]?'#ffaaee':'#ccffff',4,'',3,1)}
  poly(upperBand,'#ff00ff',9);poly(lowerBand,'#ff00ff',7);
  poly(shortMA,'#000',3);
  for(let i=1;i<price.length;i++){
    const a=price[i-1],b=price[i],dy=b[1]-a[1];
    if(Math.abs(dy)<12)continue;
    if(dy>0){const m=[a[0]+(b[0]-a[0])*.5+2,a[1]+dy*.25],n=[a[0]+(b[0]-a[0])*.8+3,a[1]+dy*.7];poly([a,m],'#0000ff',4,round);poly([m,n],'#0000ff',3,'stroke-dasharray="3 3"')}
    else{const m=[a[0]+(b[0]-a[0])*.5+2,a[1]+dy*.3];poly([[a[0]+1,a[1]],m],'#ff0000',4,round);poly([m,[b[0],b[1]+6]],'#ff0000',2,'stroke-dasharray="3 2"',1)}
  }
  let red='',blue='';
  for(let i=1;i<price.length;i++){
    const a=price[i-1],b=price[i],len=Math.hypot(b[0]-a[0],b[1]-a[1]),n=Math.max(1,Math.ceil(len/3)),up=b[1]<a[1];
    for(let k=0;k<n;k++){const t=k/n,x=a[0]+(b[0]-a[0])*t,y=a[1]+(b[1]-a[1])*t+(rnd()-.5)*6,s=3+rnd()*8,d=`M${X(x)} ${Y(y-s/2)}V${Y(y+s)}`;
      if(rnd()<(up?.6:.3))red+=d;else blue+=d;}
  }
  o+=`<path d="${red}" stroke="#ee1100" stroke-width="1.500"/><path d="${blue}" stroke="#1058d0" stroke-width="1.500"/>`;
  area(trace('b 1150,220 1157,320 1160,430 1157,612 1137,612 1137,450 1145,300'),'#33cccc');
  const arrow=(t,up,c)=>{const p=trace(t)[0],s=up?-1:1,x=X(p[0]),y=Y(p[1]);o+=`<path d="M${x-2} ${y-5*s}h5v${5*s}h2l-4.500 ${5*s}-4.500 ${-5*s}h1.500z" fill="${c}"/>`};
  ['a 205,915','a 417,378','a 583,440','b 40,670','b 283,670','b 317,628','b 378,488','b 1225,330'].forEach(t=>arrow(t,true,'#00ee22'));
  ['a 167,1025','b 317,645'].forEach(t=>arrow(t,true,'#800080'));
  ['b 20,567','b 332,465','b 351,398','b 1157,125'].forEach(t=>arrow(t,false,'#dd0022'));
  text(989,126,'최고 18,730 (-17,03%, 12:52)','#f00000','start',ko);
  text(1864,123,'피봇2차저항선 18,750 (18,00%)','#f00000','end',ko);
  text(1864,389,'피봇1차저항선 17,320 (9,00%)','#ff00cc','end',ko);
  text(1864,566,'당일시가 16,470 (3,65%)','#00ee00','end',ko);
  text(1864,683,'전일종가 15,890 (0,00%)','#993300','end',ko);
  text(1833,843,'최저 15,080 (3,05%, 15:19)','#0000e0','end',ko);

  /* volume pane */
  let vr='',vb='';
  for(let x=49;x<1855;x+=1){const b=lerp(volBase,x),u=rnd(),v=b*(.4+u*u*.9)+1;vr+=rnd()<.75?`M${X(x)+.5} ${Y(1037)}V${Y(1037-v)}`:'';if(rnd()<.65)vb+=`M${X(x)+.5} ${Y(1037)}V${Y(1037-b*(.15+rnd()*.5)-1)}`}
  volSpikes.forEach(p=>vr+=`M${X(p[0])} ${Y(1037)}V${Y(1037-p[1])}`);
  let gr='',og='',trail=lerp(osc,49),cy='';
  for(let x=49;x<=1855;x+=1){
    const y=lerp(osc,x)+(rnd()-.5)*3;trail+=(y-trail)*.09;
    cy+=(cy?'L':'M')+X(x)+' '+Y(trail);
    gr+=`M${X(x)+.5} ${Y(y-1)}V${Y(y+(trail-y)*(.3+rnd()*.7)+1)}`;
    const n=lerp(navy,x),b=lerp(brown,x),e=n+(n-b)*(.2+rnd()*.5);
    og+=`M${X(x)+.5} ${Y(Math.min(n,e)-1-rnd()*1.5)}V${Y(Math.max(n,e)+1+rnd()*1.5)}`;
  }
  o+=`<path d="${vr}" stroke="#ee1c0c"/><path d="${vb}" stroke="#1458cc"/>`;
  o+=`<path d="${gr}" stroke="#009030"/><path d="${cy}" stroke="#ccffff" stroke-width="3" fill="none"/>`;
  poly(osc,'#009030',1);
  poly(brown,'#993300',5);
  o+=`<path d="${og}" stroke="#ff9900"/>`;
  poly(navy,'#0000ff',2);

  /* axes */
  rect(6,76,49,1057,'#fff');rect(1866,76,1913,1057,'#fff');rect(6,1038,1913,1057,'#fff');
  line(6.5,77,6.5,1056,'#909090',1);line(48.5,77,48.5,1056,'#909090',1);line(1866.5,77,1866.5,1056,'#909090',1);line(1912.5,77,1912.5,1056,'#909090',1);
  line(6,1038.5,1913,1038.5,'#909090',1);line(6,1056.5,1913,1056.5,'#909090',1);line(6,882.5,1913,882.5,'#909090',1);
  line(1863.5,77,1863.5,674,'#ee1c0c',3);line(1863.5,674,1863.5,881,'#1458cc',3);
  ['18,720','18,440','18,161','17,882','17,603','17,323','17,044','16,765','16,486','16,206','15,927','15,648','15,369','15,090'].forEach((s,i)=>text(47,[117,169,221,273,327,380,437,492,549,607,666,725,786,849][i],s,'#404040','end'));
  for(let i=0;i<12;i++){if(i!==1)text(1874,111+i*69.2,(80-i*5)+',00','#404040');
    for(let k=0;k<5;k++){const y=111.5+i*69.2+k*13.8;if(y<880)line(1867,y,k?1869:1873,y,'#909090',1)}}
  ['2,500K','2,000K','1,500K','1,000K','00,000'].forEach((s,i)=>{text(42,901+i*28.5,s,'#404040','end');for(let k=0;k<5;k++)line(k?46:42,901.5+i*28.5-k*5.7,48,901.5+i*28.5-k*5.7,'#909090',1)});
  ['250,000','200,000','150,000','100,000','50,000'].forEach((s,i)=>{text(1873,912+i*24.7,s,'#404040');for(let k=0;k<5;k++)line(1867,913.5+i*24.6-k*4.9,k?1869:1872,913.5+i*24.6-k*4.9,'#909090',1)});
  ticks.forEach((x,i)=>{line(x,1038,x,1056,'#909090',1);if(times[i])text(x+2,1047,times[i],'#404040')});
  text(51,1047,'04/02','#333','start','font-weight="bold"');
  text(1875,1047,'15:30:0','#404040');
  /* crosshair and tags */
  line(L,189.5,R,189.5,'#ff0000',1);line(962.5,77,962.5,1038,'#ff0000',1);
  rect(8.5,175.5,44.5,203.500,'#ffdd66','#000');text(10,182,'18,334','#333');text(10,196,'15,38','#ee1100');
  rect(1870.5,175.5,1911.5,203.5,'#ffdd66','#000');text(1874,182,'18,334','#333');text(1871,196,'-15,38%','#ee1100');
  rect(10,742,44,755,'#1058c8');text(12,748,'5,540','#fff');text(14,761,',20%','#1058c8');
  rect(1871,742,1911,755,'#1058c8');text(1875,748,'15,540','#fff');text(1875,761,'-2,20%','#1058c8');
  text(1868,84,'LC:3,05','#ee1100');text(1868,96,'HC:-17,0','#1058c8');
  rect(894.500,1038.5,1029.5,1055.5,'#ffdd66','#000');text(962,1047,'2025/04/03(목) 12:10:20','#333','middle');
  rect(59.5,78.5,214.5,92.5,'#f0f0f0','#b8b8b8');text(63,85,'오리엔트정공 매물대 수(13)','#222','start',ko);
  rect(52.5,83.5,56.5,87.500,'#ccc','#888');
  rect(12.5,96.500,25.5,108.5,'#ddd','#000');line(14,100,24,100,'#444',1);line(14,104,24,104,'#444',1);line(17.5,98,17.5,107,'#444',1);line(21.5,98,21.5,107,'#444',1);
  rect(1903,886,1911,893,'#333');line(1905,888,1909,891,'#fff',1);line(1909,888,1905,891,'#fff',1);
  stage.innerHTML=`<svg shape-rendering="crispEdges" role="img" aria-label="오리엔트정공 차트">${o}</svg>`;
}
draw();addEventListener('resize',draw);
</script>
</body>
</html>
